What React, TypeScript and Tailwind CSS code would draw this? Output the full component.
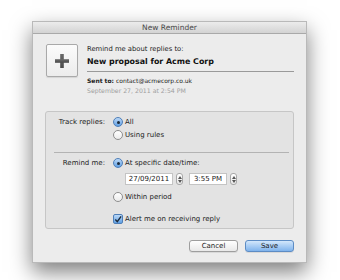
import React from "react";

const font = { fontFamily: '"DejaVu Sans", "Liberation Sans", sans-serif' };

function Radio({ checked }: { checked?: boolean }) {
  return checked ? (
    <div className="w-[10px] h-[10px] rounded-full border border-[#4f7fb8] bg-gradient-to-b from-[#bcd9f7] to-[#5f9fe3] flex items-center justify-center shrink-0">
      <div className="w-[3px] h-[3px] rounded-full bg-[#1c2a3a]" />
    </div>
  ) : (
    <div className="w-[10px] h-[10px] rounded-full border border-[#8e8e8e] bg-gradient-to-b from-[#ffffff] to-[#ebebeb] shrink-0" />
  );
}

function Stepper() {
  return (
    <div className="w-[7px] h-[12px] rounded-[3px] border border-[#a8a8a8] bg-gradient-to-b from-white to-[#e8e8e8] flex flex-col items-center justify-center gap-[1px]">
      <svg width="4" height="3" viewBox="0 0 4 3"><path d="M0 3 L2 0 L4 3 Z" fill="#555" /></svg>
      <svg width="4" height="3" viewBox="0 0 4 3"><path d="M0 0 L2 3 L4 0 Z" fill="#555" /></svg>
    </div>
  );
}

export default function App() {
  return (
    <div className="w-[340px] h-[280px] bg-white pt-[21px] pl-[32px]" style={font}>
      <div className="w-[275px] h-[242px] bg-[#ececec] border border-[#b9b9b9] shadow-[0_9px_20px_rgba(0,0,0,0.5)] flex flex-col text-[#222]">
        <div className="h-[12px] bg-gradient-to-b from-[#ececec] to-[#d3d3d3] border-b border-[#a9a9a9] flex items-center justify-center text-[7.5px] text-[#4a4a4a] leading-none">
          New Reminder
        </div>
        <div className="px-[12px] pt-[10px] flex flex-col">
          <div className="flex">
            <div className="ml-[1px] w-[32px] h-[33px] rounded-[2px] border border-[#a9a9a9] bg-gradient-to-b from-[#fbfbfb] to-[#ececec] flex items-center justify-center shadow-[0_1px_1px_rgba(0,0,0,0.1)]">
              <svg width="16" height="16" viewBox="0 0 16 16">
                <defs>
                  <linearGradient id="pg" x1="0" y1="0" x2="0" y2="1">
                    <stop offset="0" stopColor="#6a6a6a" />
                    <stop offset="1" stopColor="#4a4a4a" />
                  </linearGradient>
                </defs>
                <rect x="6.2" y="1" width="3.6" height="14" fill="url(#pg)" />
                <rect x="1" y="6.2" width="14" height="3.6" fill="url(#pg)" />
              </svg>
            </div>
            <div className="ml-[9px] flex-1 flex flex-col">
              <div className="h-[10px] leading-[10px] text-[6.8px]">Remind me about replies to:</div>
              <div className="mt-[2px] h-[12px] leading-[12px] text-[7.9px] font-bold text-[#111]">New proposal for Acme Corp</div>
              <div className="mt-[3px] h-px bg-[#9a9a9a]" />
              <div className="mt-[4px] h-[10px] leading-[10px] text-[6px]"><span className="font-bold">Sent to:</span> contact@acmecorp.co.uk</div>
              <div className="h-[9px] leading-[9px] text-[6.2px] text-[#a0a0a0]">September 27, 2011 at 2:54 PM</div>
            </div>
          </div>

          <div className="mt-[16px] h-[118px] rounded-[3px] border border-[#c6c6c6] bg-[#e3e3e3] pt-[4px] flex flex-col text-[7px]">
            <div className="flex items-center h-[12px]">
              <div className="w-[59px] text-right">Track replies:</div>
              <div className="ml-[8px] flex items-center gap-[2px]"><Radio checked /><span>All</span></div>
            </div>
            <div className="mt-[1px] flex items-center h-[12px]">
              <div className="w-[59px]" />
              <div className="ml-[8px] flex items-center gap-[2px]"><Radio /><span>Using rules</span></div>
            </div>
            <div className="mt-[11px] ml-[8px] mr-[4px] h-px bg-[#b3b3b3]" />
            <div className="mt-[4px] flex items-center h-[12px]">
              <div className="w-[59px] text-right">Remind me:</div>
              <div className="ml-[8px] flex items-center gap-[2px]"><Radio checked /><span>At specific date/time:</span></div>
            </div>
            <div className="mt-[4px] flex items-center h-[12px]">
              <div className="w-[79px]" />
              <div className="w-[48px] h-[12px] bg-white border border-[#c4c4c4] flex items-center justify-center text-[7px]">27/09/2011</div>
              <div className="ml-[3px]"><Stepper /></div>
              <div className="ml-[6px] w-[38px] h-[12px] bg-white border border-[#c4c4c4] flex items-center justify-center text-[7px]">3:55 PM</div>
              <div className="ml-[3px]"><Stepper /></div>
            </div>
            <div className="mt-[6px] flex items-center h-[12px]">
              <div className="w-[59px]" />
              <div className="ml-[8px] flex items-center gap-[2px]"><Radio /><span>Within period</span></div>
            </div>
            <div className="mt-[10px] flex items-center h-[12px]">
              <div className="w-[59px]" />
              <div className="ml-[8px] flex items-center gap-[2px]">
                <div className="w-[10px] h-[10px] rounded-[2px] border border-[#4f7fb8] bg-gradient-to-b from-[#bcd9f7] to-[#5f9fe3] flex items-center justify-center">
                  <svg width="9" height="9" viewBox="0 0 9 9"><path d="M1.5 4.5 L3.7 7 L8 1" stroke="#1c2a3a" strokeWidth="1.6" fill="none" /></svg>
                </div>
                <span>Alert me on receiving reply</span>
              </div>
            </div>
          </div>

          <div className="mt-[11px] flex justify-end gap-[7px]">
            <div className="w-[49px] h-[12px] rounded-[3px] border border-[#9e9e9e] bg-gradient-to-b from-white to-[#e9e9e9] flex items-center justify-center text-[7px] shadow-[0_1px_0_rgba(0,0,0,0.08)]">Cancel</div>
            <div className="w-[49px] h-[12px] rounded-[3px] border border-[#5d8cc4] bg-gradient-to-b from-[#d3e7fb] to-[#7fb3ec] flex items-center justify-center text-[7px] shadow-[0_1px_0_rgba(0,0,0,0.08)]">Save</div>
          </div>
        </div>
      </div>
    </div>
  );
}
